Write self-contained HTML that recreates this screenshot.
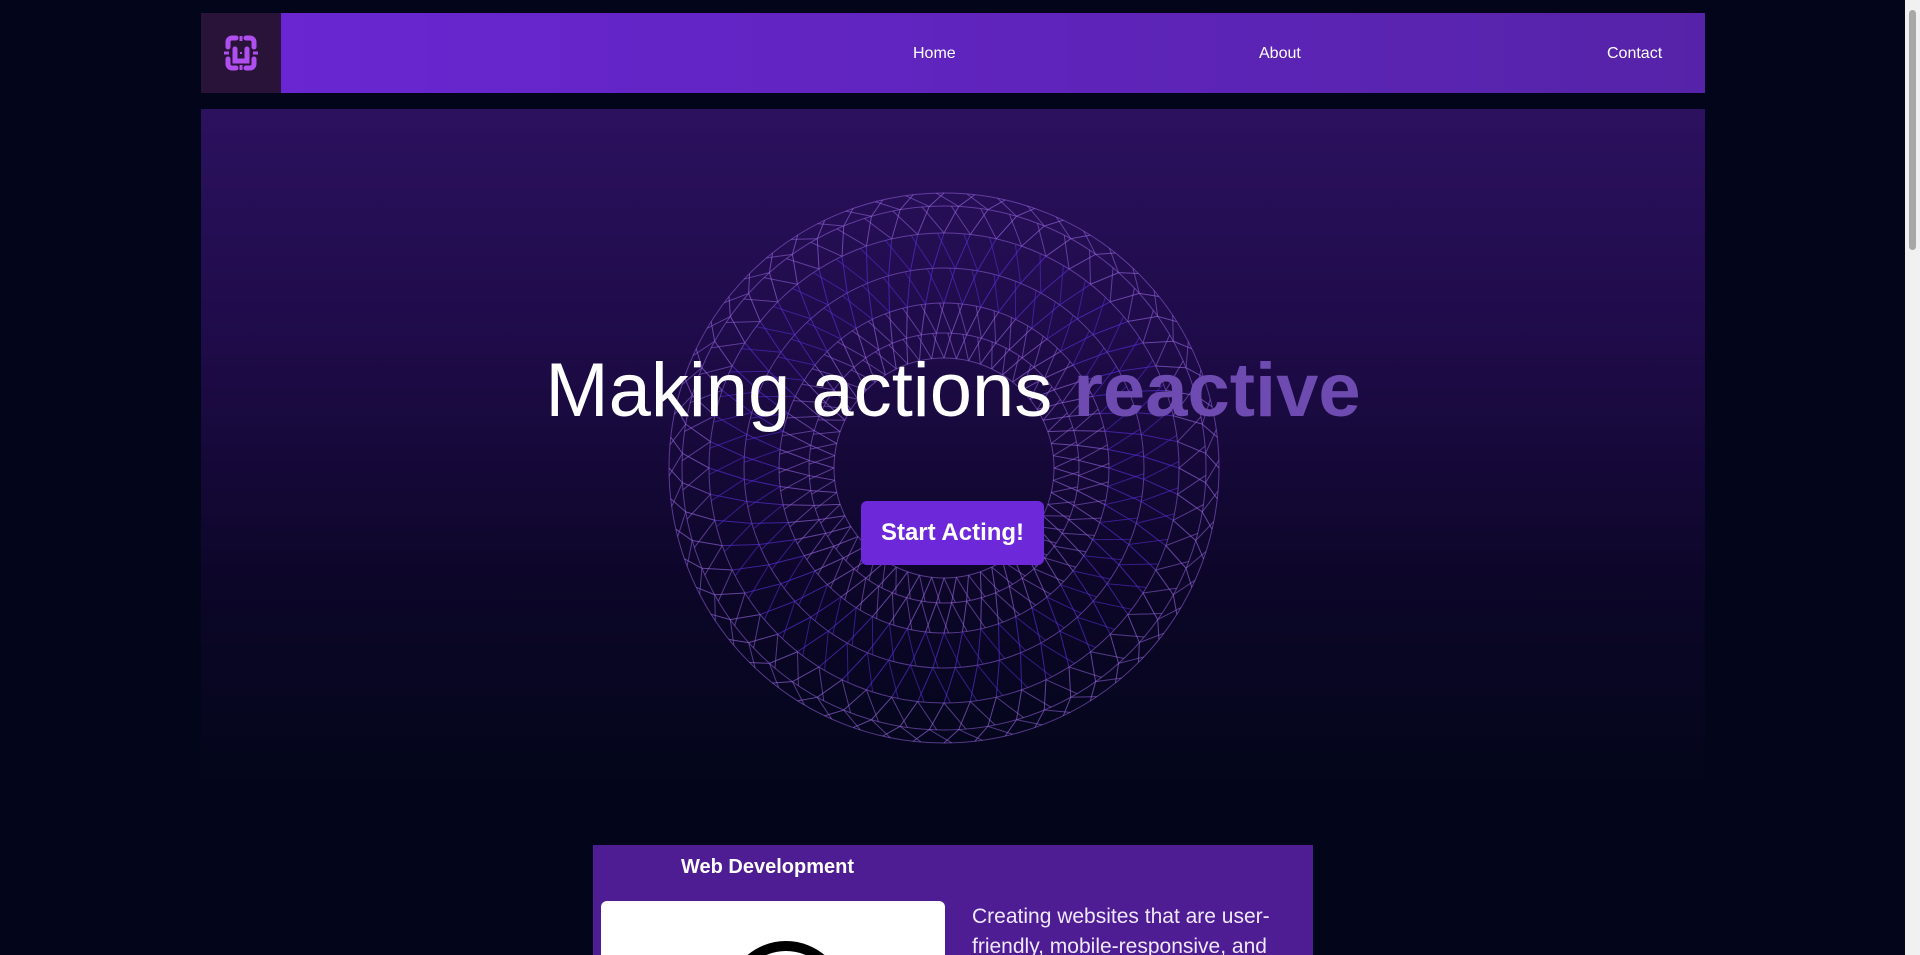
<!DOCTYPE html>
<html><head><meta charset="utf-8"><style>
*{margin:0;padding:0;box-sizing:border-box}
html,body{width:1920px;height:955px;overflow:hidden;background:#03061a;font-family:"Liberation Sans","Noto Sans CJK JP",sans-serif;color:#fff}
.nav{position:absolute;left:201px;top:13px;width:1504px;height:80px;background:linear-gradient(90deg,#6a26d4,#5623a8)}
.logo{position:absolute;left:0;top:0;width:80px;height:80px;background:#2a1338}
.nav a{position:absolute;top:32px;font-size:16px;color:#fff;text-decoration:none}
.hero{position:absolute;left:201px;top:109px;width:1504px;height:680px;background:linear-gradient(180deg,#2c115f 0%,#1e0b48 35%,#0c0628 70%,#03061a 100%)}
h1{position:absolute;left:0;width:100%;top:238px;text-align:center;font-weight:400;font-size:76px;white-space:nowrap;padding-left:0}
h1 b{color:#6e4bb0}
.btn{position:absolute;left:660px;top:392px;width:183px;height:64px;background:#6d28d9;border-radius:6px;font-weight:bold;font-size:24px;line-height:64px;text-align:center}
.card{position:absolute;left:593px;top:845px;width:720px;height:110px;background:#4e1d93;overflow:hidden}
.card h3{position:absolute;left:88px;top:11px;font-size:20px}
.wbox{position:absolute;left:8px;top:56px;width:344px;height:60px;background:#fff;border-radius:6px;overflow:hidden}
.wbox div{position:absolute;left:125px;top:40px;width:120px;height:120px;border:10px solid #000;border-radius:50%}
.card p{position:absolute;left:379px;top:57px;width:320px;font-size:21px;line-height:30px;color:#f0e8ff}
.sb{position:absolute;right:0;top:0;width:15px;height:955px;background:#f1f1f1}
.sb div{position:absolute;left:4px;top:10px;width:7px;height:240px;background:#a8a8a8;border-radius:4px}
</style></head><body>
<div class="nav">
<div class="logo"><svg width="80" height="80" viewBox="0 0 80 80"><g fill="none" stroke="#b04ff0" stroke-width="5" stroke-linecap="round"><path d="M27 34v-5a4 4 0 0 1 4-4h4M45 25h4a4 4 0 0 1 4 4v5M53 46v5a4 4 0 0 1-4 4h-4M35 55h-4a4 4 0 0 1-4-4v-5"/><path d="M34 36v12h12V36"/></g><g stroke="#b04ff0" stroke-width="3"><path d="M40 23v5M40 52v5M23 40h5M52 40h5"/></g><rect x="39" y="39" width="2" height="2" fill="#b04ff0"/></svg></div>
<a style="left:712px">Home</a><a style="left:1058px">About</a><a style="left:1406px">Contact</a>
</div>
<div class="hero">
<svg id="t" width="1504" height="680" style="position:absolute;left:0;top:0"></svg>
<h1>Making actions <b>reactive</b></h1>
<div class="btn">Start Acting!</div>
</div>
<div class="card"><h3>Web Development</h3><div class="wbox"><div></div></div>
<p>Creating websites that are user-friendly, mobile-responsive, and</p></div>
<div class="sb"><div></div></div>
<script>
var s=document.getElementById('t'),cx=743,cy=359,out='';
var N=56,R=[110,135,165,200,235,262,275];
function p(r,a){return [cx+r*Math.cos(a),cy+r*Math.sin(a)];}
for(var j=0;j<R.length;j++){out+='<circle cx="'+cx+'" cy="'+cy+'" r="'+R[j]+'" fill="none" stroke="#8a5cd0" stroke-opacity="0.6" stroke-width="1"/>';}
for(var j=0;j<R.length-1;j++){for(var i=0;i<N;i++){var a=2*Math.PI*i/N,off=(j%2)*Math.PI/N;
var A=p(R[j],a+off),B=p(R[j+1],a+off+Math.PI/N),C=p(R[j+1],a+off-Math.PI/N*1.5);
var col=(j<2||j>3)?'#9466dc':'#5a30d8';
out+='<line x1="'+A[0]+'" y1="'+A[1]+'" x2="'+B[0]+'" y2="'+B[1]+'" stroke="'+col+'" stroke-opacity="0.65"/>';
out+='<line x1="'+A[0]+'" y1="'+A[1]+'" x2="'+C[0]+'" y2="'+C[1]+'" stroke="'+col+'" stroke-opacity="0.55"/>';}}
s.innerHTML=out;
</script>
</body></html>
